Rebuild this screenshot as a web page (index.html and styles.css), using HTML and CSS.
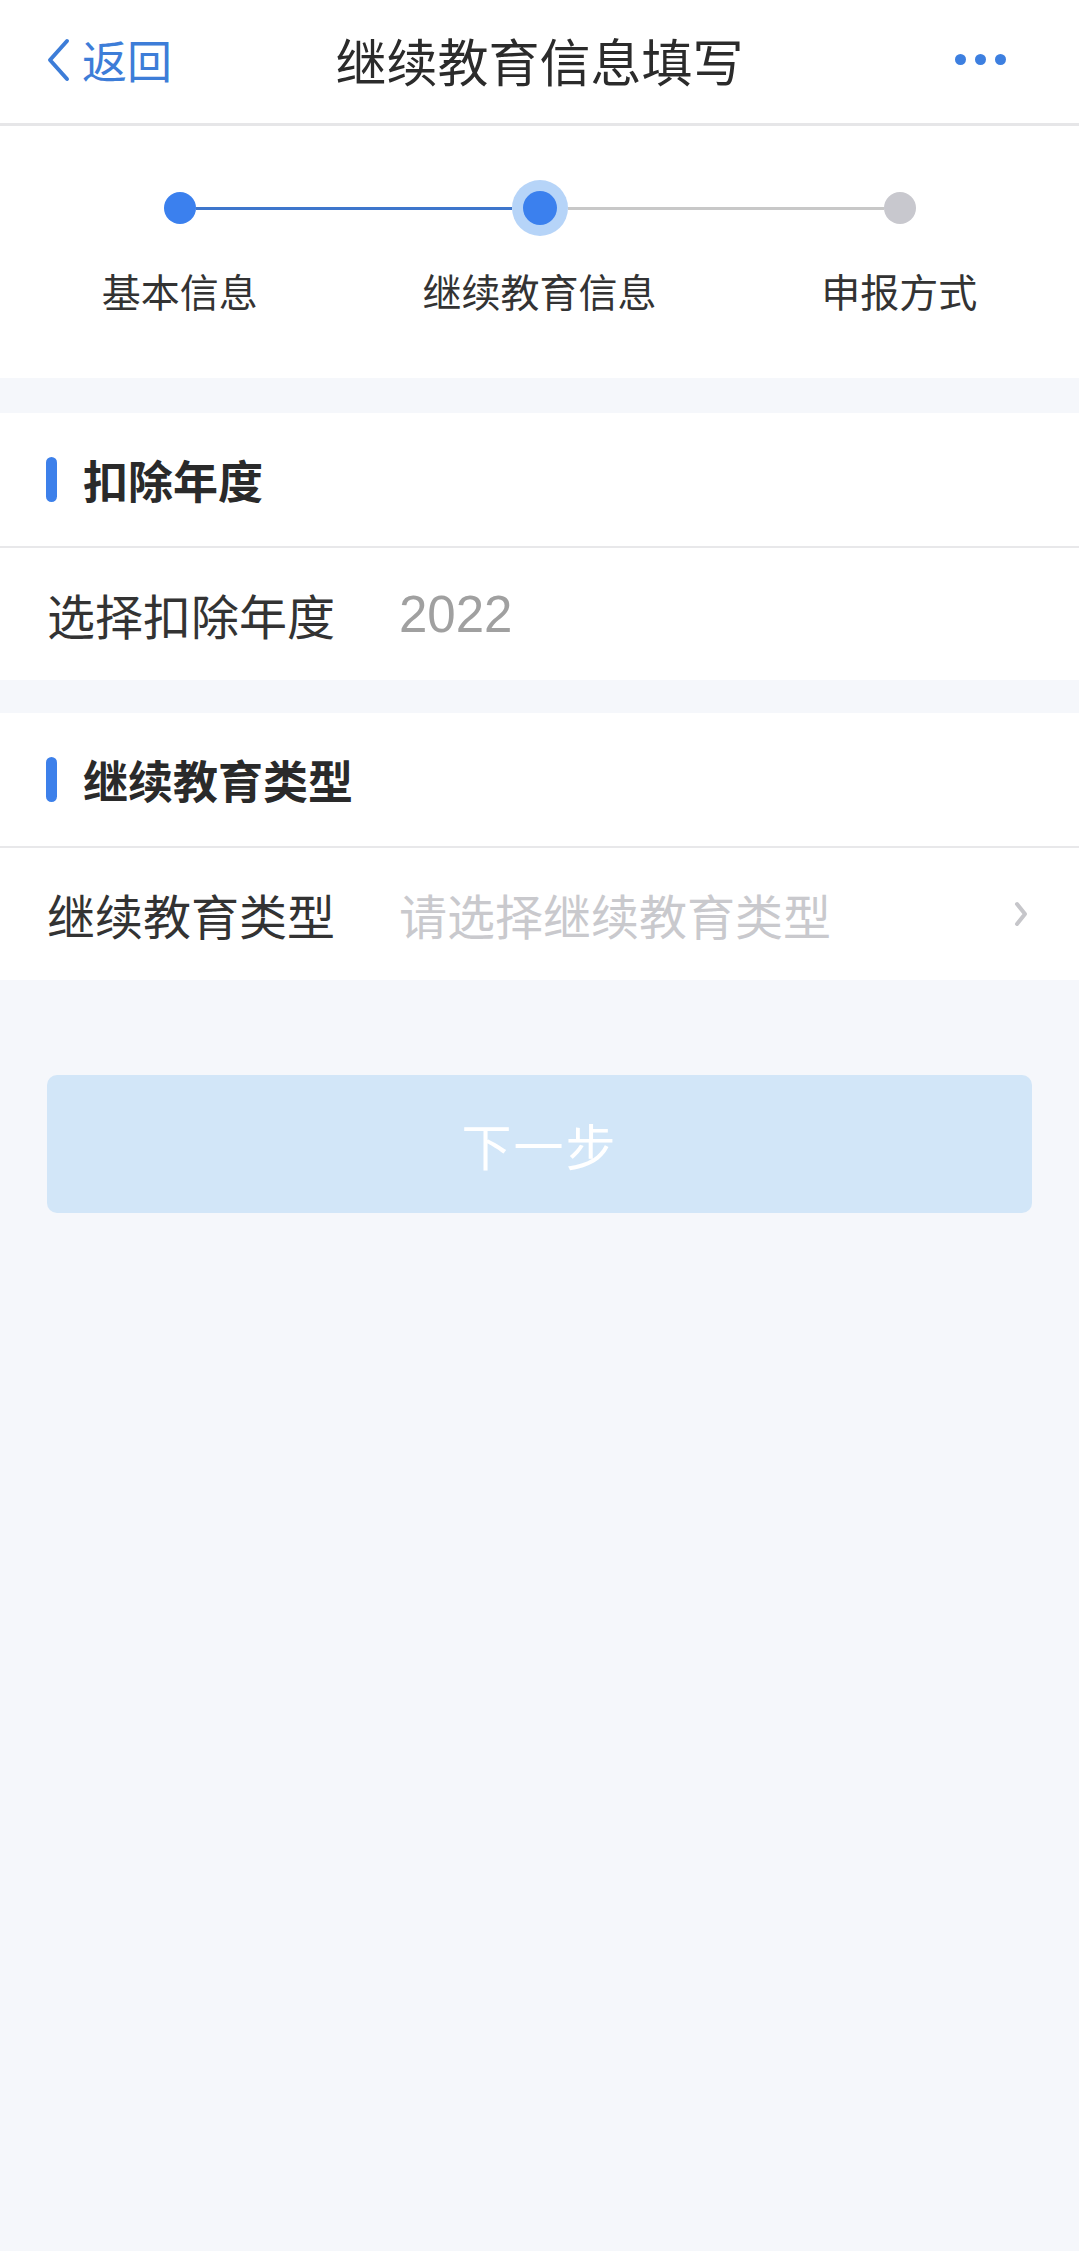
FILE: index.html
```html
<!DOCTYPE html>
<html lang="zh-CN">
<head>
  <meta charset="UTF-8">
  <meta name="viewport" content="width=device-width, initial-scale=1.0">
  <title>继续教育信息填写</title>
  <link rel="stylesheet" href="styles.css">
</head>
<body>
  <header class="nav">
    <div class="nav-back">
      <svg class="back-icon" viewBox="0 0 24 44" width="24" height="44">
        <path d="M21 3 L4 22 L21 41" fill="none" stroke="#3d7dd8" stroke-width="4" stroke-linecap="round" stroke-linejoin="round"/>
      </svg>
      <span>返回</span>
    </div>
    <h1 class="nav-title">继续教育信息填写</h1>
    <div class="nav-more">
      <i></i><i></i><i></i>
    </div>
  </header>

  <section class="steps">
    <div class="step-track">
      <span class="dot done"></span>
      <span class="line done"></span>
      <span class="dot current"><b></b></span>
      <span class="line"></span>
      <span class="dot"></span>
    </div>
    <div class="step-labels">
      <span>基本信息</span>
      <span>继续教育信息</span>
      <span>申报方式</span>
    </div>
  </section>

  <section class="card">
    <div class="card-head"><span class="bar"></span>扣除年度</div>
    <div class="row">
      <span class="row-label">选择扣除年度</span>
      <span class="row-value year">2022</span>
    </div>
  </section>

  <section class="card">
    <div class="card-head"><span class="bar"></span>继续教育类型</div>
    <div class="row">
      <span class="row-label">继续教育类型</span>
      <span class="row-value placeholder">请选择继续教育类型</span>
      <svg class="arrow" viewBox="0 0 14 28" width="14" height="28">
        <path d="M3 4 L11 14 L3 24" fill="none" stroke="#c6c6ca" stroke-width="4" stroke-linecap="round" stroke-linejoin="round"/>
      </svg>
    </div>
  </section>

  <div class="actions">
    <button class="next-btn" disabled>下一步</button>
  </div>
</body>
</html>
```

FILE: styles.css
```css
body {
  margin: 0;
  padding: 0;
  background: #f5f7fb;
  font-family: "Noto Sans CJK SC", "Noto Sans", sans-serif;
  color: #333;
}
.nav {
  display: grid;
  grid-template-columns: 1fr auto 1fr;
  align-items: center;
  height: 123px;
  background: #fff;
  border-bottom: 3px solid #e6e6e8;
}
.nav-back {
  display: flex;
  align-items: center;
  padding-left: 46px;
  margin-top: -4px;
  color: #3d7dd8;
  font-size: 45px;
  line-height: 60px;
}
.back-icon {
  margin-right: 12px;
}
.nav-title {
  margin: 0;
  margin-top: -4px;
  font-size: 51px;
  font-weight: 400;
  line-height: 70px;
  color: #2b2b2b;
}
.nav-more {
  display: flex;
  justify-content: flex-end;
  gap: 9px;
  padding-right: 73px;
  margin-top: -4px;
}
.nav-more i {
  width: 11px;
  height: 11px;
  border-radius: 50%;
  background: #3d7fe0;
}
.steps {
  background: #fff;
  padding: 54px 0 61px;
}
.step-track {
  display: flex;
  align-items: center;
  padding: 0 163px 0 164px;
  height: 56px;
}
.dot {
  width: 32px;
  height: 32px;
  border-radius: 50%;
  background: #c8c8ce;
  flex-shrink: 0;
}
.dot.done {
  background: #3b80ee;
}
.dot.current {
  width: 56px;
  height: 56px;
  background: #b6d4f8;
  display: flex;
  align-items: center;
  justify-content: center;
}
.dot.current b {
  width: 34px;
  height: 34px;
  border-radius: 50%;
  background: #3b80ee;
}
.line {
  flex: 1;
  height: 3px;
  background: #c8c8c8;
}
.line.done {
  background: #3e76cc;
}
.step-labels {
  display: grid;
  grid-template-columns: repeat(3, 1fr);
  margin-top: 27px;
  text-align: center;
  font-size: 39px;
  line-height: 54px;
  color: #333;
}
.card {
  background: #fff;
  margin-top: 35px;
}
.card + .card {
  margin-top: 33px;
}
.card-head {
  display: flex;
  align-items: center;
  height: 133px;
  padding-left: 46px;
  border-bottom: 2px solid #e8e8ea;
  font-size: 45px;
  font-weight: 700;
  color: #2a2a2a;
}
.bar {
  width: 11px;
  height: 45px;
  border-radius: 6px;
  background: #3d80ea;
  margin-right: 26px;
}
.row {
  display: flex;
  align-items: center;
  height: 132px;
  padding: 0 47px;
  font-size: 48px;
}
.row-label {
  width: 352px;
  color: #333;
}
.row-value {
  flex: 1;
  color: #a0a0a0;
}
.row-value.year {
  font-family: "Liberation Sans", Arial, sans-serif;
  font-size: 51px;
}
.row-value.placeholder {
  color: #c9c9cd;
}
.arrow {
  margin-right: 4px;
}
.actions {
  padding: 95px 47px 0;
}
.next-btn {
  display: block;
  width: 100%;
  height: 138px;
  border: none;
  border-radius: 10px;
  background: #d2e6f8;
  color: #fff;
  font-family: inherit;
  font-size: 50px;
  letter-spacing: 2px;
}
```
